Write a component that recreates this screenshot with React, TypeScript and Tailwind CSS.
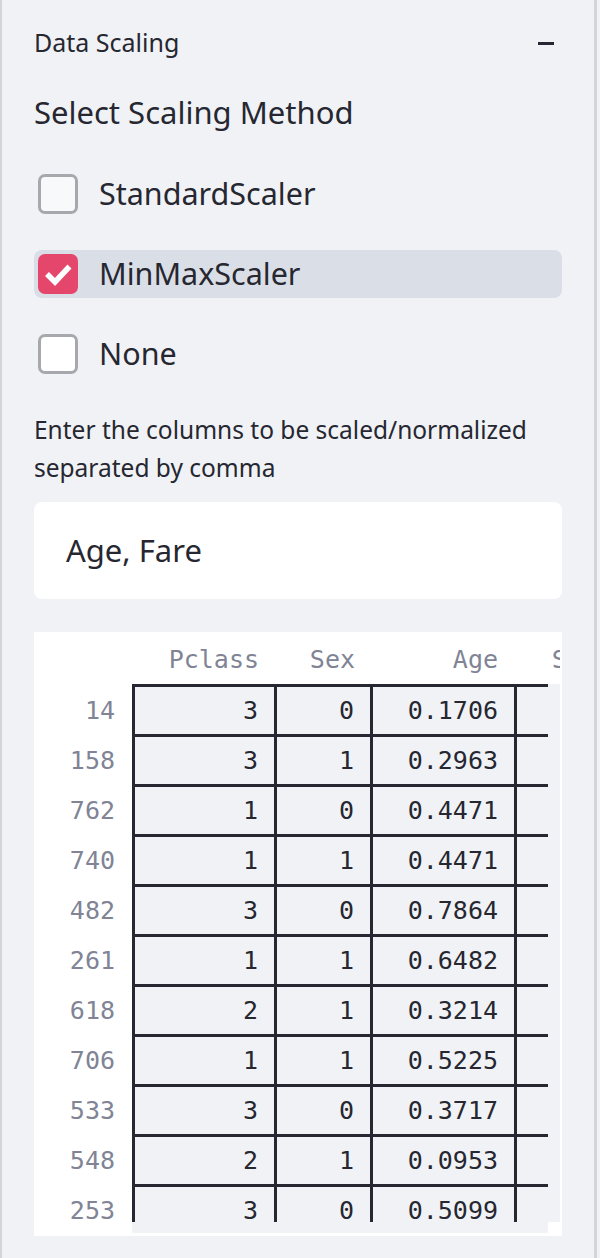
import { Fragment } from "react";

const options = [
    { label: "StandardScaler", checked: false, hover: true },
    { label: "MinMaxScaler", checked: true, hover: false },
    { label: "None", checked: false, hover: false },
];

const rows = [
    ["14", "3", "0", "0.1706"],
    ["158", "3", "1", "0.2963"],
    ["762", "1", "0", "0.4471"],
    ["740", "1", "1", "0.4471"],
    ["482", "3", "0", "0.7864"],
    ["261", "1", "1", "0.6482"],
    ["618", "2", "1", "0.3214"],
    ["706", "1", "1", "0.5225"],
    ["533", "3", "0", "0.3717"],
    ["548", "2", "1", "0.0953"],
    ["253", "3", "0", "0.5099"],
];

function Checkbox({ checked, hover }: { checked: boolean; hover: boolean }) {
    if (checked) {
        return (
            <div className="w-[40px] h-[40px] rounded-[7px] bg-[#e5466b] flex items-center justify-center shrink-0">
                <svg width="40" height="40" viewBox="0 0 40 40">
                    <polyline points="9,20 17,28 31.5,12.5" fill="none" stroke="#ffffff" strokeWidth="5.5" />
                </svg>
            </div>
        );
    }
    return (
        <div className={`w-[40px] h-[40px] rounded-[7px] border-[3px] border-[#a6a8ae] shrink-0 ${hover ? "bg-[#f8f9fb]" : "bg-white"}`} />
    );
}

export default function App() {
    return (
        <div className="w-[600px] min-h-[1258px] bg-[#f0f2f6] font-['Noto_Sans',sans-serif] text-[#262730]">
            <div className="w-[597px] min-h-[1258px] border-l-2 border-r-[3px] border-[#d3d5db] px-[32px]">
                <div className="h-[86px] flex items-center justify-between">
                    <span className="text-[25px]">Data Scaling</span>
                    <div className="w-[16px] h-[3px] bg-[#262730] mr-[8px]" />
                </div>

                <div className="mt-[6px] h-[40px] leading-[40px] text-[31px]">Select Scaling Method</div>

                <div className="mt-[38px] flex flex-col gap-[32px]">
                    {options.map((o) => (
                        <div
                            key={o.label}
                            className={`h-[48px] flex items-center gap-[21px] pl-[4px] rounded-[8px] ${o.checked ? "bg-[#dadee6]" : ""}`}
                        >
                            <Checkbox checked={o.checked} hover={o.hover} />
                            <span className="text-[30.5px]">{o.label}</span>
                        </div>
                    ))}
                </div>

                <p className="mt-[33px] text-[24.5px] leading-[38px]">
                    Enter the columns to be scaled/normalized separated by comma
                </p>

                <div className="mt-[15px] h-[97px] bg-white rounded-[8px] flex items-center pl-[32px] text-[31px]">
                    Age, Fare
                </div>

                {/* dataframe */}
                <div className="mt-[33px] h-[604px] bg-white font-['DejaVu_Sans_Mono',monospace] text-[25px]">
                    <div className="h-[52px] pt-[4px] flex text-[#808495]">
                        <div className="w-[98px] shrink-0" />
                        <div className="w-[428px] overflow-hidden flex items-center">
                            <div className="w-[142px] shrink-0 text-right pr-[15px]">Pclass</div>
                            <div className="w-[96px] shrink-0 text-right pr-[15px]">Sex</div>
                            <div className="w-[144px] shrink-0 text-right pr-[16px]">Age</div>
                            <div className="w-[129px] shrink-0 text-right pr-[16px]">SibSp</div>
                        </div>
                    </div>
                    <div className="flex">
                        <div className="w-[98px] shrink-0 text-[#808495]">
                            {rows.map((r) => (
                                <div key={r[0]} className="h-[50px] pt-[3px] pr-[17px] flex items-center justify-end">
                                    {r[0]}
                                </div>
                            ))}
                        </div>
                        <div className="w-[428px] flex flex-col">
                            <div className="h-[538px] bg-[#f0f2f6]">
                                <div className="w-[416px] h-full overflow-hidden">
                                    {rows.map((r) => (
                                        <div key={r[0]} className="w-[650px] h-[50px] flex border-t-[3px] border-[#262730]">
                                            {[r[1], r[2], r[3], ""].map((v, i) => (
                                                <Fragment key={i}>
                                                    <div
                                                        className={`shrink-0 border-l-[3px] border-[#262730] flex items-center justify-end pr-[16px] ${
                                                            i === 0 ? "w-[142px]" : i === 1 ? "w-[96px]" : i === 2 ? "w-[144px]" : "w-[129px]"
                                                        }`}
                                                    >
                                                        {v}
                                                    </div>
                                                </Fragment>
                                            ))}
                                        </div>
                                    ))}
                                </div>
                            </div>
                            <div className="h-[11px] w-[416px] bg-[#f0f2f6]" />
                        </div>
                    </div>
                </div>
            </div>
        </div>
    );
}
